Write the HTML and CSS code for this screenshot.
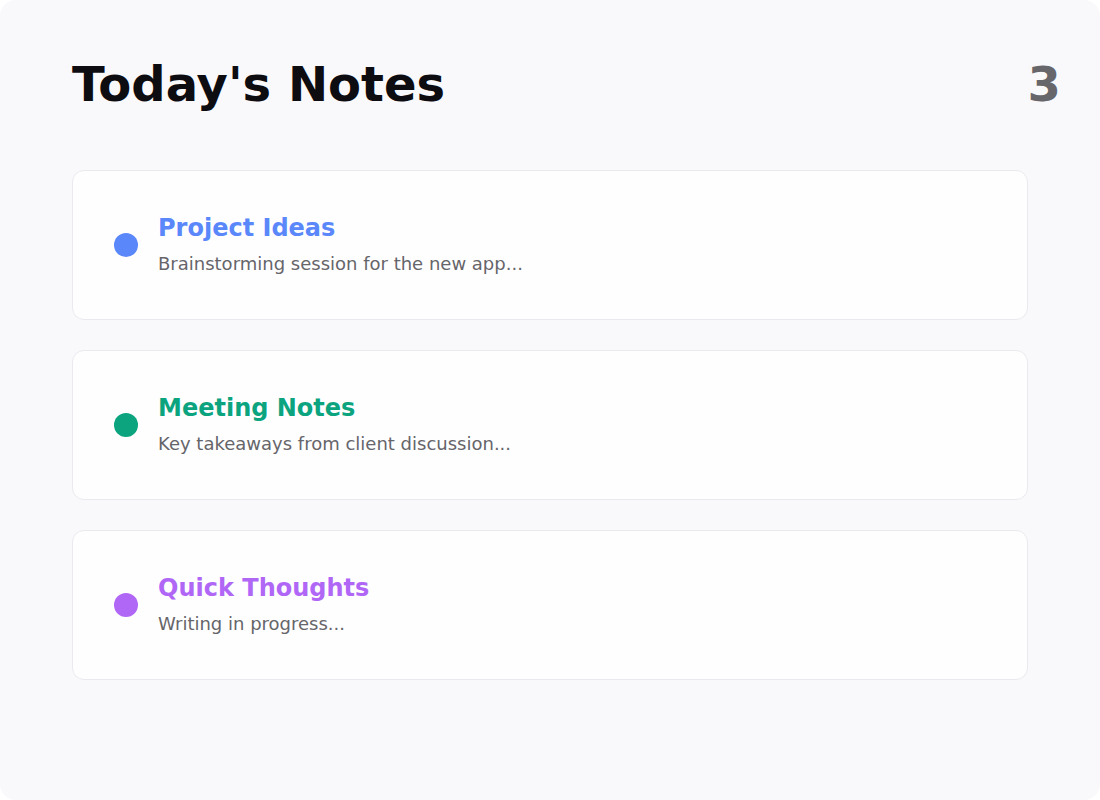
FILE: index.html
```html
<!DOCTYPE html>
<html lang="en">
<head>
<meta charset="utf-8">
<title>Today's Notes</title>
<link rel="stylesheet" href="styles.css">
</head>
<body>
<main class="panel">
  <header class="header">
    <h1 class="title">Today's Notes</h1>
    <span class="count">3</span>
  </header>
  <ul class="notes">
    <li class="note">
      <span class="dot dot-blue"></span>
      <div class="note-body">
        <h2 class="note-title blue">Project Ideas</h2>
        <p class="note-desc">Brainstorming session for the new app...</p>
      </div>
    </li>
    <li class="note">
      <span class="dot dot-green"></span>
      <div class="note-body">
        <h2 class="note-title green">Meeting Notes</h2>
        <p class="note-desc">Key takeaways from client discussion...</p>
      </div>
    </li>
    <li class="note">
      <span class="dot dot-purple"></span>
      <div class="note-body">
        <h2 class="note-title purple">Quick Thoughts</h2>
        <p class="note-desc">Writing in progress...</p>
      </div>
    </li>
  </ul>
</main>
</body>
</html>
```

FILE: styles.css
```css
* { box-sizing: border-box; }
html, body {
  margin: 0;
  padding: 0;
  background: #ffffff;
}
body {
  font-family: "DejaVu Sans", sans-serif;
}
.panel {
  width: 1100px;
  height: 800px;
  background: #f9f8fb;
  border-radius: 16px;
  padding: 52px 72px 0 72px;
}
.header {
  display: flex;
  align-items: center;
  justify-content: space-between;
  margin-right: -33px;
  height: 64px;
}
.title {
  margin: 0;
  font-size: 48px;
  font-weight: 700;
  color: #0d0c10;
  line-height: 64px;
}
.count {
  font-size: 48px;
  font-weight: 700;
  color: #67666b;
  line-height: 64px;
}
.notes {
  list-style: none;
  margin: 54px 0 0 0;
  padding: 0;
  display: flex;
  flex-direction: column;
  gap: 30px;
}
.note {
  height: 150px;
  background: #fefeff;
  border: 1px solid #ebe9ee;
  border-radius: 12px;
  display: flex;
  align-items: center;
  padding: 0 41px;
  gap: 20px;
}
.dot {
  width: 24px;
  height: 24px;
  border-radius: 50%;
  flex: none;
}
.dot-blue { background: #5a87fa; }
.dot-green { background: #0ba47f; }
.dot-purple { background: #b067f6; }
.note-title {
  margin: 0;
  font-size: 24px;
  font-weight: 700;
  line-height: 28px;
}
.blue { color: #5a87fa; }
.green { color: #0ba47f; }
.purple { color: #b067f6; }
.note-desc {
  margin: 10px 0 0 0;
  font-size: 18px;
  color: #66656a;
  line-height: 24px;
}
```
